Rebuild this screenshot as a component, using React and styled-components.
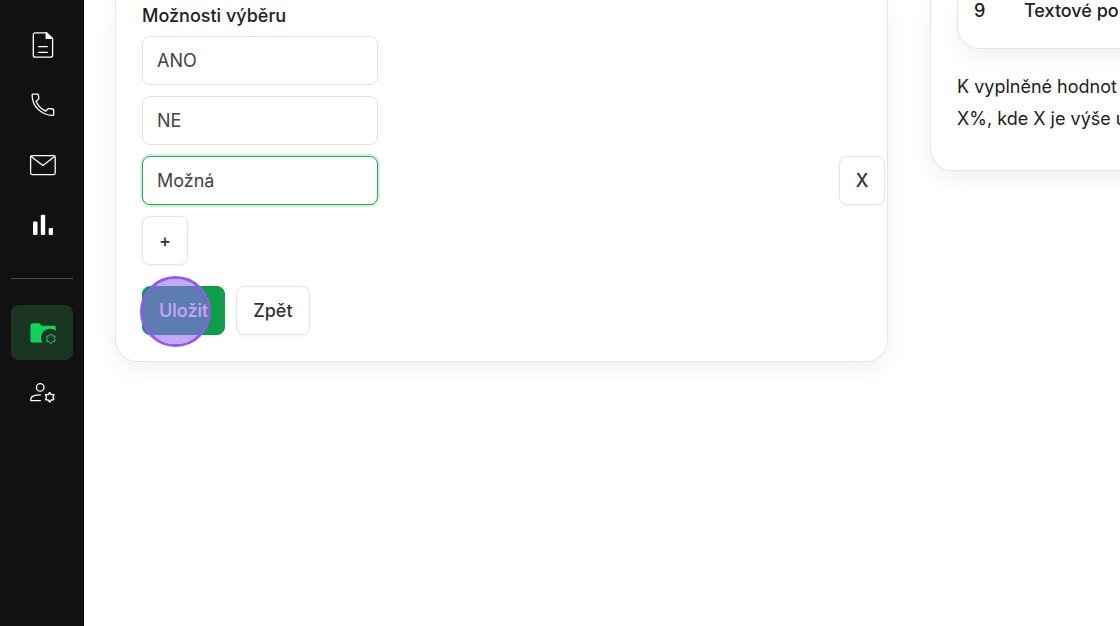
import React from "react";
import styled, { createGlobalStyle, css } from "styled-components";

const options = ["ANO", "NE", "Možná"];

const App = () => {
  return (
    <PageStyled>
      <GlobalStyle />
      <Sidebar />
      <MainStyled>
        <FormCardStyled>
          <OptionsForm />
        </FormCardStyled>
        <InfoColumnStyled>
          <InfoCardStyled>
            <TableCardStyled>
              <table>
                <tbody>
                  <tr>
                    <td>9</td>
                    <td>Textové po</td>
                  </tr>
                </tbody>
              </table>
            </TableCardStyled>
            <p>
              K vyplněné hodnot
              <br />
              X%, kde X je výše u
            </p>
          </InfoCardStyled>
        </InfoColumnStyled>
      </MainStyled>
    </PageStyled>
  );
};

export default App;

const OptionsForm = () => {
  return (
    <FormStyled onSubmit={(event) => event.preventDefault()}>
      <FieldsetStyled>
        <legend id="options-label">Možnosti výběru</legend>
        {options.map((option, index) => {
          const isLast = index === options.length - 1;
          return (
            <OptionRowStyled key={option}>
              <InputStyled
                type="text"
                defaultValue={option}
                aria-labelledby="options-label"
                $isActive={isLast}
              />
              {isLast && (
                <ButtonStyled type="button" $isSquare>
                  X
                </ButtonStyled>
              )}
            </OptionRowStyled>
          );
        })}
        <ButtonStyled type="button" $isSquare>
          +
        </ButtonStyled>
      </FieldsetStyled>
      <ActionsStyled>
        <ButtonStyled type="submit" $isPrimary>
          Uložit
          <ClickMarkerStyled />
        </ButtonStyled>
        <ButtonStyled type="button">Zpět</ButtonStyled>
      </ActionsStyled>
    </FormStyled>
  );
};

const Sidebar = () => {
  return (
    <SidebarStyled>
      <NavLinkStyled href="#documents" aria-label="documents">
        <DocumentIcon />
      </NavLinkStyled>
      <NavLinkStyled href="#calls" aria-label="calls">
        <PhoneIcon />
      </NavLinkStyled>
      <NavLinkStyled href="#mail" aria-label="mail">
        <MailIcon />
      </NavLinkStyled>
      <NavLinkStyled href="#stats" aria-label="stats">
        <ChartIcon />
      </NavLinkStyled>
      <hr />
      <NavLinkStyled href="#projects" aria-label="projects" $isActive>
        <FolderGearIcon />
      </NavLinkStyled>
      <NavLinkStyled href="#users" aria-label="users">
        <UserGearIcon />
      </NavLinkStyled>
    </SidebarStyled>
  );
};

const DocumentIcon = () => (
  <IconStyled viewBox="-1 0 28 28">
    <path d="M17.5 1.8H6.300a2 2 0 0 0-2 2v20.400a2 2 0 0 0 2 2h15.300a2 2 0 0 0 2-2V7.600z" />
    <path d="M17.200 1.800v5.600h6.200z" fill="currentColor" />
    <path d="M9 15.600h9.800M9 21.400h9.800" />
  </IconStyled>
);

const PhoneIcon = () => (
  <IconStyled viewBox="-1 0 28 28">
    <path d="M4 3.200h4.400c.6 0 .9.3 1 .9l.4 2.900c.1.6-.1 1-.6 1.500L7.100 10.300c1.900 4.400 5.300 7.900 9.800 9.900l1.700-2.100c.4-.5.9-.7 1.500-.6l3.600.5c.6.1 1 .5 1 1.100v4.300c0 .6-.4 1-1 1C12.200 24.200 3.200 15.300 3.100 4.200c0-.6.3-1 .9-1z" />
  </IconStyled>
);

const MailIcon = () => (
  <IconStyled viewBox="-1 0 28 28">
    <rect x="1.600" y="4.600" width="24.600" height="19" rx="1.500" />
    <path d="M2.200 5.400l11.700 9 11.700-9" />
  </IconStyled>
);

const ChartIcon = () => (
  <IconStyled viewBox="-1 0 28 28">
    <g fill="currentColor" stroke="none">
      <rect x="4" y="10.500" width="4.500" height="13.500" rx="1" />
      <rect x="11.800" y="3.800" width="4.400" height="20.200" rx="1" />
      <rect x="19.700" y="17" width="4.300" height="7" rx="1" />
    </g>
  </IconStyled>
);

const FolderGearIcon = () => (
  <IconStyled viewBox="-1 0 28 28">
    <path
      d="M1.500 6.500c0-1.500.8-2.300 2.300-2.300h5.400c.8 0 1.400.3 1.900.8L12.800 6.700h12c1.300 0 2 .8 2 2v3.100a9 9 0 0 0-13.400 11.700H3c-1 0-1.500-.6-1.500-1.500z"
      fill="currentColor"
      stroke="none"
    />
    <path
      d="M21.800 14.800l1.700 2.100 2.700.3-1 2.500 1 2.500-2.700.4-1.700 2.100-1.700-2.100-2.700-.4 1-2.500-1-2.500 2.700-.3z"
      strokeWidth="1"
    />
  </IconStyled>
);

const UserGearIcon = () => (
  <IconStyled viewBox="-1 0 28 28">
    <circle cx="11.200" cy="8.400" r="3.800" />
    <path d="M11.900 15.900C6 15.700 1.800 17.300 1.800 20.200v1.500h10.100" />
    <path d="M20.700 13.500l1.500 2 2.700.2-1 2.500 1 2.500-2.700.3-1.500 2-1.500-2-2.700-.3 1-2.500-1-2.500 2.700-.2z" />
  </IconStyled>
);

const GlobalStyle = createGlobalStyle`
  * {
    box-sizing: border-box;
  }

  body {
    margin: 0;
    background: #ffffff;
    color: #222222;
    font-family: "Inter", sans-serif;
    font-size: 18px;
  }

  button,
  input {
    font-family: inherit;
    font-size: inherit;
  }
`;

const PageStyled = styled.div`
  display: flex;
  min-height: 100vh;
  overflow: hidden;
`;

const SidebarStyled = styled.nav`
  display: flex;
  flex-direction: column;
  gap: 5px;
  flex: 0 0 84px;
  padding: 17px 10px 17px 11px;
  background: #111111;
  border-right: 1px solid #000000;

  hr {
    width: 100%;
    margin: 21px 0;
    border: none;
    border-top: 1px solid #4a4a4a;
  }
`;

const NavLinkStyled = styled.a`
  display: flex;
  align-items: center;
  justify-content: center;
  height: 55px;
  border-radius: 8px;
  color: #ffffff;

  ${({ $isActive }) =>
    $isActive &&
    css`
      background: #1a3522;
      color: #0bd65c;
    `}
`;

const IconStyled = styled.svg`
  width: 28px;
  height: 28px;
  fill: none;
  stroke: currentColor;
  stroke-width: 1.3;
  stroke-linejoin: round;
`;

const MainStyled = styled.main`
  display: flex;
  align-items: flex-start;
  gap: 42px;
  flex: 1;
  min-width: 0;
  padding-left: 31px;
`;

const cardStyle = css`
  background: #ffffff;
  border: 1px solid #e5e5e5;
  border-top: none;
  border-radius: 0 0 22px 22px;
  box-shadow: 0 8px 24px rgb(0 0 0 / 6%);
`;

const FormCardStyled = styled.section`
  ${cardStyle}
  flex: 1;
  min-width: 0;
  padding: 4px 26px 26px;
`;

const FormStyled = styled.form`
  display: flex;
  flex-direction: column;
  gap: 21px;
`;

const FieldsetStyled = styled.fieldset`
  min-width: 0;
  margin: 0;
  padding: 0;
  border: none;

  legend {
    padding: 0;
    margin-bottom: 8px;
    font-weight: 500;
    line-height: 24px;
  }
`;

const OptionRowStyled = styled.div`
  display: flex;
  justify-content: space-between;
  margin: 0 -24px 11px 0;
`;

const InputStyled = styled.input`
  width: 236px;
  height: 49px;
  padding: 0 14px;
  background: #ffffff;
  border: 1px solid #e2e2e2;
  border-radius: 8px;
  color: #444444;
  outline: none;

  ${({ $isActive }) =>
    $isActive &&
    css`
      border-color: #2fa35a;
      box-shadow: 0 0 0 2px #cdf5d8;
    `}
`;

const ActionsStyled = styled.div`
  display: flex;
  gap: 11px;
`;

const ButtonStyled = styled.button`
  position: relative;
  height: 49px;
  padding: 0 16px;
  background: #ffffff;
  border: 1px solid #e5e5e5;
  border-radius: 8px;
  box-shadow: 0 1px 3px rgb(0 0 0 / 6%);
  color: #333333;
  font-weight: 500;
  cursor: pointer;

  ${({ $isSquare }) =>
    $isSquare &&
    css`
      width: 46px;
      padding: 0;
    `}

  ${({ $isPrimary }) =>
    $isPrimary &&
    css`
      background: #0c9f46;
      border-color: #0c9f46;
      color: #ffffff;
    `}
`;

const ClickMarkerStyled = styled.span`
  position: absolute;
  top: -11px;
  left: -3px;
  width: 71px;
  height: 71px;
  background: rgb(155 98 255 / 57%);
  border: 3px solid #8f5cf0;
  border-radius: 50%;
  background-clip: padding-box;
  pointer-events: none;
`;

const InfoColumnStyled = styled.aside`
  flex: 0 0 190px;
  min-width: 0;
`;

/* wider than its column, the page cuts it at the window edge */
const InfoCardStyled = styled.section`
  ${cardStyle}
  width: 380px;
  padding: 0 26px 35px;

  p {
    margin: 22px 0 0;
    line-height: 32px;
    white-space: nowrap;
  }
`;

const TableCardStyled = styled.div`
  ${cardStyle}
  padding: 0 16px 26px;

  table {
    border-collapse: collapse;
    font-weight: 500;
    line-height: 22px;
  }

  td {
    padding: 0;
  }

  td:first-child {
    width: 50px;
  }
`;
